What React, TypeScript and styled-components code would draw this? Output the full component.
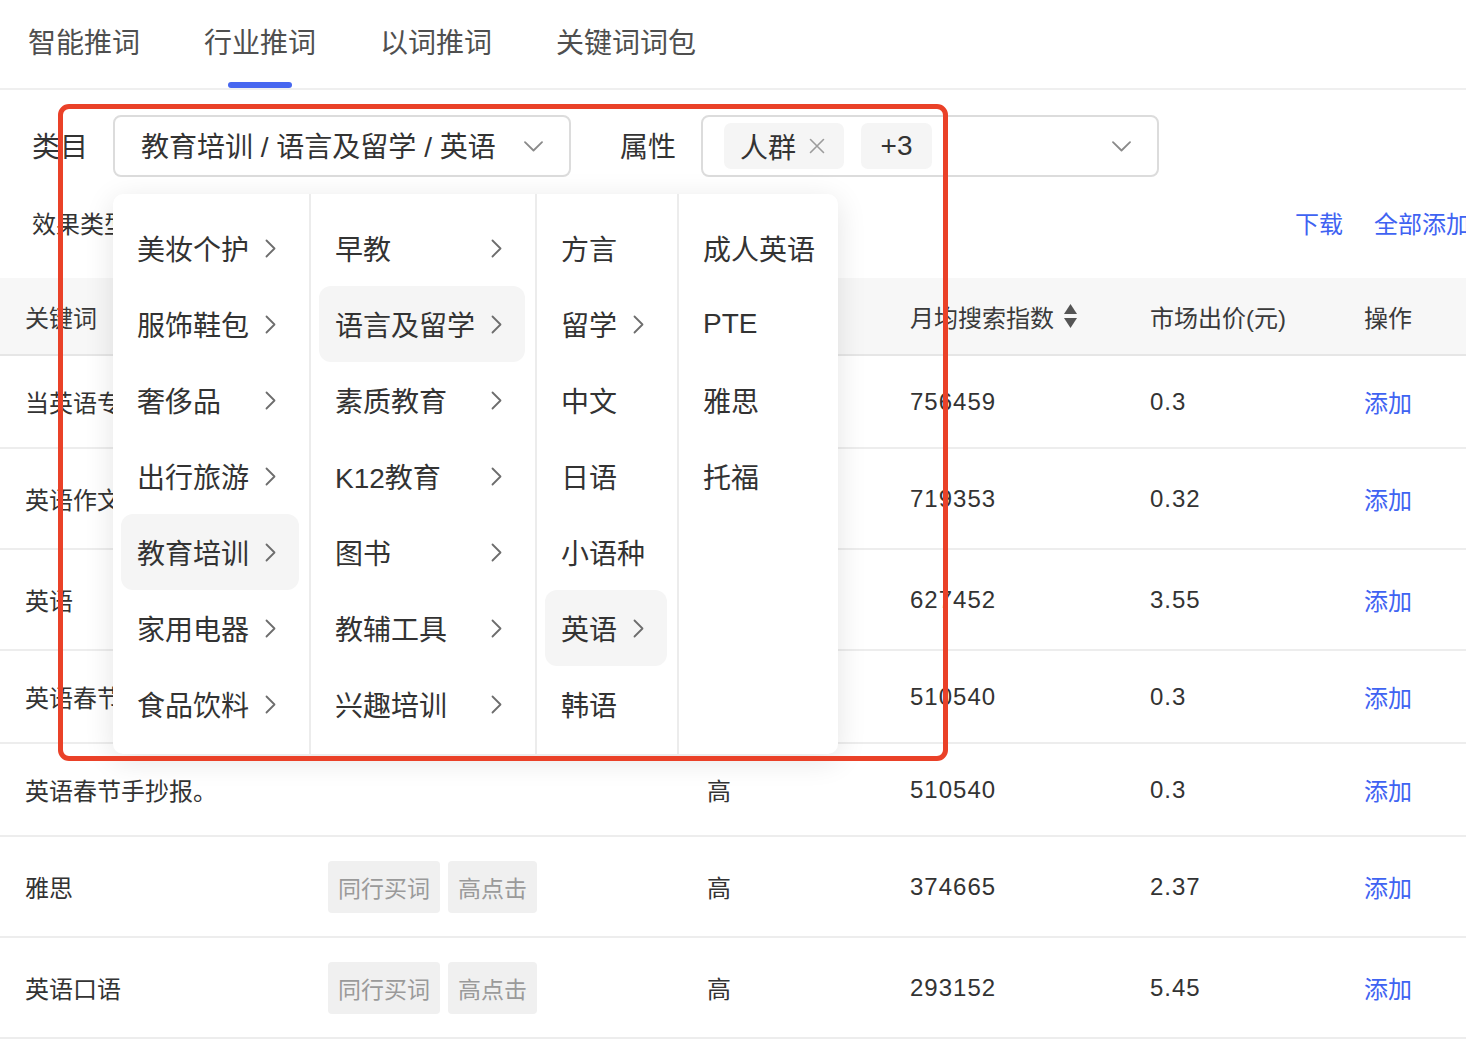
import React from "react";
import styled, { createGlobalStyle } from "styled-components";

const GlobalStyle = createGlobalStyle`
  html, body {
    margin: 0;
    padding: 0;
    background: #ffffff;
    overflow: hidden;
  }
  body {
    font-family: "Liberation Sans", "Noto Sans CJK SC", sans-serif;
    color: #333333;
  }
  * { box-sizing: border-box; }
`;

const Page = styled.div`
  position: relative;
  width: 1510px;
  min-height: 1048px;
`;

const TabBar = styled.div`
  display: flex;
  gap: 64px;
  height: 90px;
  padding-left: 28px;
  border-bottom: 2px solid #efefef;
`;

const Tab = styled.div<{ $active?: boolean }>`
  position: relative;
  display: flex;
  align-items: flex-start;
  padding-top: 25px;
  height: 88px;
  font-size: 28px;
  line-height: 38px;
  color: #4f4f4f;
  &::after {
    content: "";
    display: ${(p) => (p.$active ? "block" : "none")};
    position: absolute;
    left: 50%;
    bottom: 0;
    width: 64px;
    height: 6px;
    margin-left: -32px;
    border-radius: 3px;
    background: #4767f0;
  }
`;

const FilterBar = styled.div`
  display: flex;
  align-items: center;
  margin-top: 25px;
  padding-left: 32px;
  height: 62px;
`;

const FieldLabel = styled.div<{ $gapLeft?: number }>`
  padding-top: 4px;
  font-size: 28px;
  line-height: 38px;
  color: #333;
  margin-left: ${(p) => p.$gapLeft ?? 0}px;
  margin-right: 25px;
  white-space: nowrap;
`;

const CategoryWrap = styled.div`
  position: relative;
`;

const SelectBox = styled.div`
  display: flex;
  align-items: center;
  justify-content: space-between;
  width: 458px;
  height: 62px;
  border: 2px solid #dcdcdc;
  border-radius: 8px;
  background: #fff;
`;

const CategoryValue = styled.div`
  padding: 4px 0 0 26px;
  font-size: 28px;
  line-height: 38px;
  color: #333;
  white-space: nowrap;
`;

const ArrowSlot = styled.div`
  display: flex;
  align-items: center;
  padding-right: 26px;
`;

const TagList = styled.div`
  display: flex;
  align-items: center;
  gap: 17px;
  padding-left: 21px;
`;

const SelectTag = styled.div`
  display: flex;
  align-items: center;
  gap: 13px;
  height: 46px;
  padding: 0 19px 0 16px;
  border-radius: 7px;
  background: #f5f5f5;
  font-size: 28px;
  color: #333;
`;

const CountTag = styled(SelectTag)`
  padding: 0 16px;
  justify-content: center;
  min-width: 71px;
`;

const Cascader = styled.div`
  position: absolute;
  left: 0;
  top: 79px;
  z-index: 10;
  display: flex;
  height: 560px;
  background: #fff;
  border-radius: 10px;
  box-shadow: 0 6px 30px rgba(0, 0, 0, 0.11);
`;

const CascaderColumn = styled.div<{ $width: number; $last?: boolean }>`
  display: flex;
  flex-direction: column;
  width: ${(p) => p.$width}px;
  padding: 16px 10px 12px 8px;
  border-right: ${(p) => (p.$last ? "none" : "2px solid #ececec")};
`;

const CascaderItem = styled.div<{ $active?: boolean }>`
  display: flex;
  align-items: center;
  justify-content: space-between;
  height: 76px;
  padding: 0 23px 0 16px;
  border-radius: 12px;
  background: ${(p) => (p.$active ? "#f5f5f5" : "transparent")};
  font-size: 28px;
  color: #333;
  white-space: nowrap;
`;

const ToolRow = styled.div`
  display: flex;
  align-items: center;
  justify-content: space-between;
  margin-top: 15px;
  height: 60px;
  padding: 0 40px 0 32px;
`;

const ToolLabel = styled.div`
  font-size: 24px;
  color: #333;
`;

const Actions = styled.div`
  display: flex;
  gap: 31px;
`;

const LinkText = styled.span`
  font-size: 24px;
  color: #3f63f2;
  white-space: nowrap;
`;

const Table = styled.div`
  margin-top: 26px;
`;

const gridCols = "303px 379px 203px 240px 214px 1fr";

const HeaderRow = styled.div`
  display: grid;
  grid-template-columns: ${gridCols};
  align-items: center;
  height: 78px;
  padding-left: 25px;
  background: #f7f7f7;
  border-bottom: 2px solid #e6e6e6;
`;

const HeadCell = styled.div`
  display: flex;
  align-items: center;
  gap: 9px;
  font-size: 24px;
  color: #3a3a3a;
  white-space: nowrap;
`;

const Row = styled.div<{ $tall?: boolean }>`
  display: grid;
  grid-template-columns: ${gridCols};
  align-items: center;
  height: ${(p) => (p.$tall ? 101 : 93)}px;
  padding-left: 25px;
  border-bottom: 2px solid #ededed;
`;

const Cell = styled.div`
  font-size: 24px;
  color: #333;
  white-space: nowrap;
  overflow: hidden;
`;

const NumCell = styled(Cell)`
  letter-spacing: 1px;
`;

const TagGroup = styled.div`
  display: flex;
  gap: 8px;
`;

const RowTag = styled.div`
  display: flex;
  align-items: center;
  height: 52px;
  padding: 0 10px;
  border-radius: 4px;
  background: #f0f0f0;
  font-size: 23px;
  color: #9a9a9a;
`;

const Annotation = styled.div`
  position: absolute;
  left: 58px;
  top: 104px;
  width: 890px;
  height: 657px;
  border: 5px solid #ea4128;
  border-radius: 11px;
  z-index: 20;
  pointer-events: none;
`;

const ChevronDown = () => (
  <svg width="19" height="11" viewBox="0 0 19 11" fill="none">
    <path d="M1 1.2 L9.5 9.5 L18 1.2" stroke="#8a8a8a" strokeWidth="1.8" strokeLinecap="round" strokeLinejoin="round" />
  </svg>
);

const ChevronRight = () => (
  <svg width="11" height="19" viewBox="0 0 11 19" fill="none">
    <path d="M1.5 1.5 L9.5 9.5 L1.5 17.5" stroke="#6d6d6d" strokeWidth="1.8" strokeLinecap="round" strokeLinejoin="round" />
  </svg>
);

const CloseIcon = () => (
  <svg width="16" height="16" viewBox="0 0 16 16" fill="none">
    <path d="M1.5 1.5 L14.5 14.5 M14.5 1.5 L1.5 14.5" stroke="#9c9c9c" strokeWidth="1.6" strokeLinecap="round" />
  </svg>
);

const SortIcon = () => (
  <svg width="15" height="26" viewBox="0 0 15 26" fill="none">
    <path d="M7.5 1 L14 11 L1 11 Z" fill="#555" />
    <path d="M7.5 25 L14 15 L1 15 Z" fill="#555" />
  </svg>
);

type CItem = { label: string; arrow?: boolean; active?: boolean };

const columns: { width: number; items: CItem[] }[] = [
  {
    width: 198,
    items: [
      { label: "美妆个护", arrow: true },
      { label: "服饰鞋包", arrow: true },
      { label: "奢侈品", arrow: true },
      { label: "出行旅游", arrow: true },
      { label: "教育培训", arrow: true, active: true },
      { label: "家用电器", arrow: true },
      { label: "食品饮料", arrow: true },
    ],
  },
  {
    width: 226,
    items: [
      { label: "早教", arrow: true },
      { label: "语言及留学", arrow: true, active: true },
      { label: "素质教育", arrow: true },
      { label: "K12教育", arrow: true },
      { label: "图书", arrow: true },
      { label: "教辅工具", arrow: true },
      { label: "兴趣培训", arrow: true },
    ],
  },
  {
    width: 142,
    items: [
      { label: "方言" },
      { label: "留学", arrow: true },
      { label: "中文" },
      { label: "日语" },
      { label: "小语种" },
      { label: "英语", arrow: true, active: true },
      { label: "韩语" },
    ],
  },
  {
    width: 159,
    items: [{ label: "成人英语" }, { label: "PTE" }, { label: "雅思" }, { label: "托福" }],
  },
];

type RowData = {
  keyword: string;
  tags: boolean;
  level: string;
  index: string;
  price: string;
  tall: boolean;
  covered: boolean;
};

const rows: RowData[] = [
  { keyword: "当英语专", tags: false, level: "高", index: "756459", price: "0.3", tall: false, covered: true },
  { keyword: "英语作文", tags: false, level: "高", index: "719353", price: "0.32", tall: true, covered: true },
  { keyword: "英语", tags: false, level: "高", index: "627452", price: "3.55", tall: true, covered: true },
  { keyword: "英语春节", tags: false, level: "高", index: "510540", price: "0.3", tall: false, covered: true },
  { keyword: "英语春节手抄报。", tags: false, level: "高", index: "510540", price: "0.3", tall: false, covered: false },
  { keyword: "雅思", tags: true, level: "高", index: "374665", price: "2.37", tall: true, covered: false },
  { keyword: "英语口语", tags: true, level: "高", index: "293152", price: "5.45", tall: true, covered: false },
];

export default function App() {
  return (
    <>
      <GlobalStyle />
      <Page>
        <TabBar>
          <Tab>智能推词</Tab>
          <Tab $active>行业推词</Tab>
          <Tab>以词推词</Tab>
          <Tab>关键词词包</Tab>
        </TabBar>

        <FilterBar>
          <FieldLabel>类目</FieldLabel>
          <CategoryWrap>
            <SelectBox>
              <CategoryValue>教育培训 / 语言及留学 / 英语</CategoryValue>
              <ArrowSlot>
                <ChevronDown />
              </ArrowSlot>
            </SelectBox>
            <Cascader>
              {columns.map((col, ci) => (
                <CascaderColumn key={ci} $width={col.width} $last={ci === columns.length - 1}>
                  {col.items.map((it) => (
                    <CascaderItem key={it.label} $active={it.active}>
                      <span>{it.label}</span>
                      {it.arrow && <ChevronRight />}
                    </CascaderItem>
                  ))}
                </CascaderColumn>
              ))}
            </Cascader>
          </CategoryWrap>
          <FieldLabel $gapLeft={49}>属性</FieldLabel>
          <SelectBox>
            <TagList>
              <SelectTag>
                <span>人群</span>
                <CloseIcon />
              </SelectTag>
              <CountTag>+3</CountTag>
            </TagList>
            <ArrowSlot>
              <ChevronDown />
            </ArrowSlot>
          </SelectBox>
        </FilterBar>

        <ToolRow>
          <ToolLabel>效果类型</ToolLabel>
          <Actions>
            <LinkText>下载</LinkText>
            <LinkText>全部添加</LinkText>
          </Actions>
        </ToolRow>

        <Table>
          <HeaderRow>
            <HeadCell>关键词</HeadCell>
            <HeadCell />
            <HeadCell />
            <HeadCell>
              月均搜索指数
              <SortIcon />
            </HeadCell>
            <HeadCell>市场出价(元)</HeadCell>
            <HeadCell>操作</HeadCell>
          </HeaderRow>
          {rows.map((r, i) => (
            <Row key={i} $tall={r.tall}>
              <Cell>{r.keyword}</Cell>
              <div>
                {r.tags && (
                  <TagGroup>
                    <RowTag>同行买词</RowTag>
                    <RowTag>高点击</RowTag>
                  </TagGroup>
                )}
              </div>
              <Cell>{r.covered ? "" : r.level}</Cell>
              <NumCell>{r.index}</NumCell>
              <NumCell>{r.price}</NumCell>
              <Cell>
                <LinkText>添加</LinkText>
              </Cell>
            </Row>
          ))}
        </Table>

        <Annotation />
      </Page>
    </>
  );
}
